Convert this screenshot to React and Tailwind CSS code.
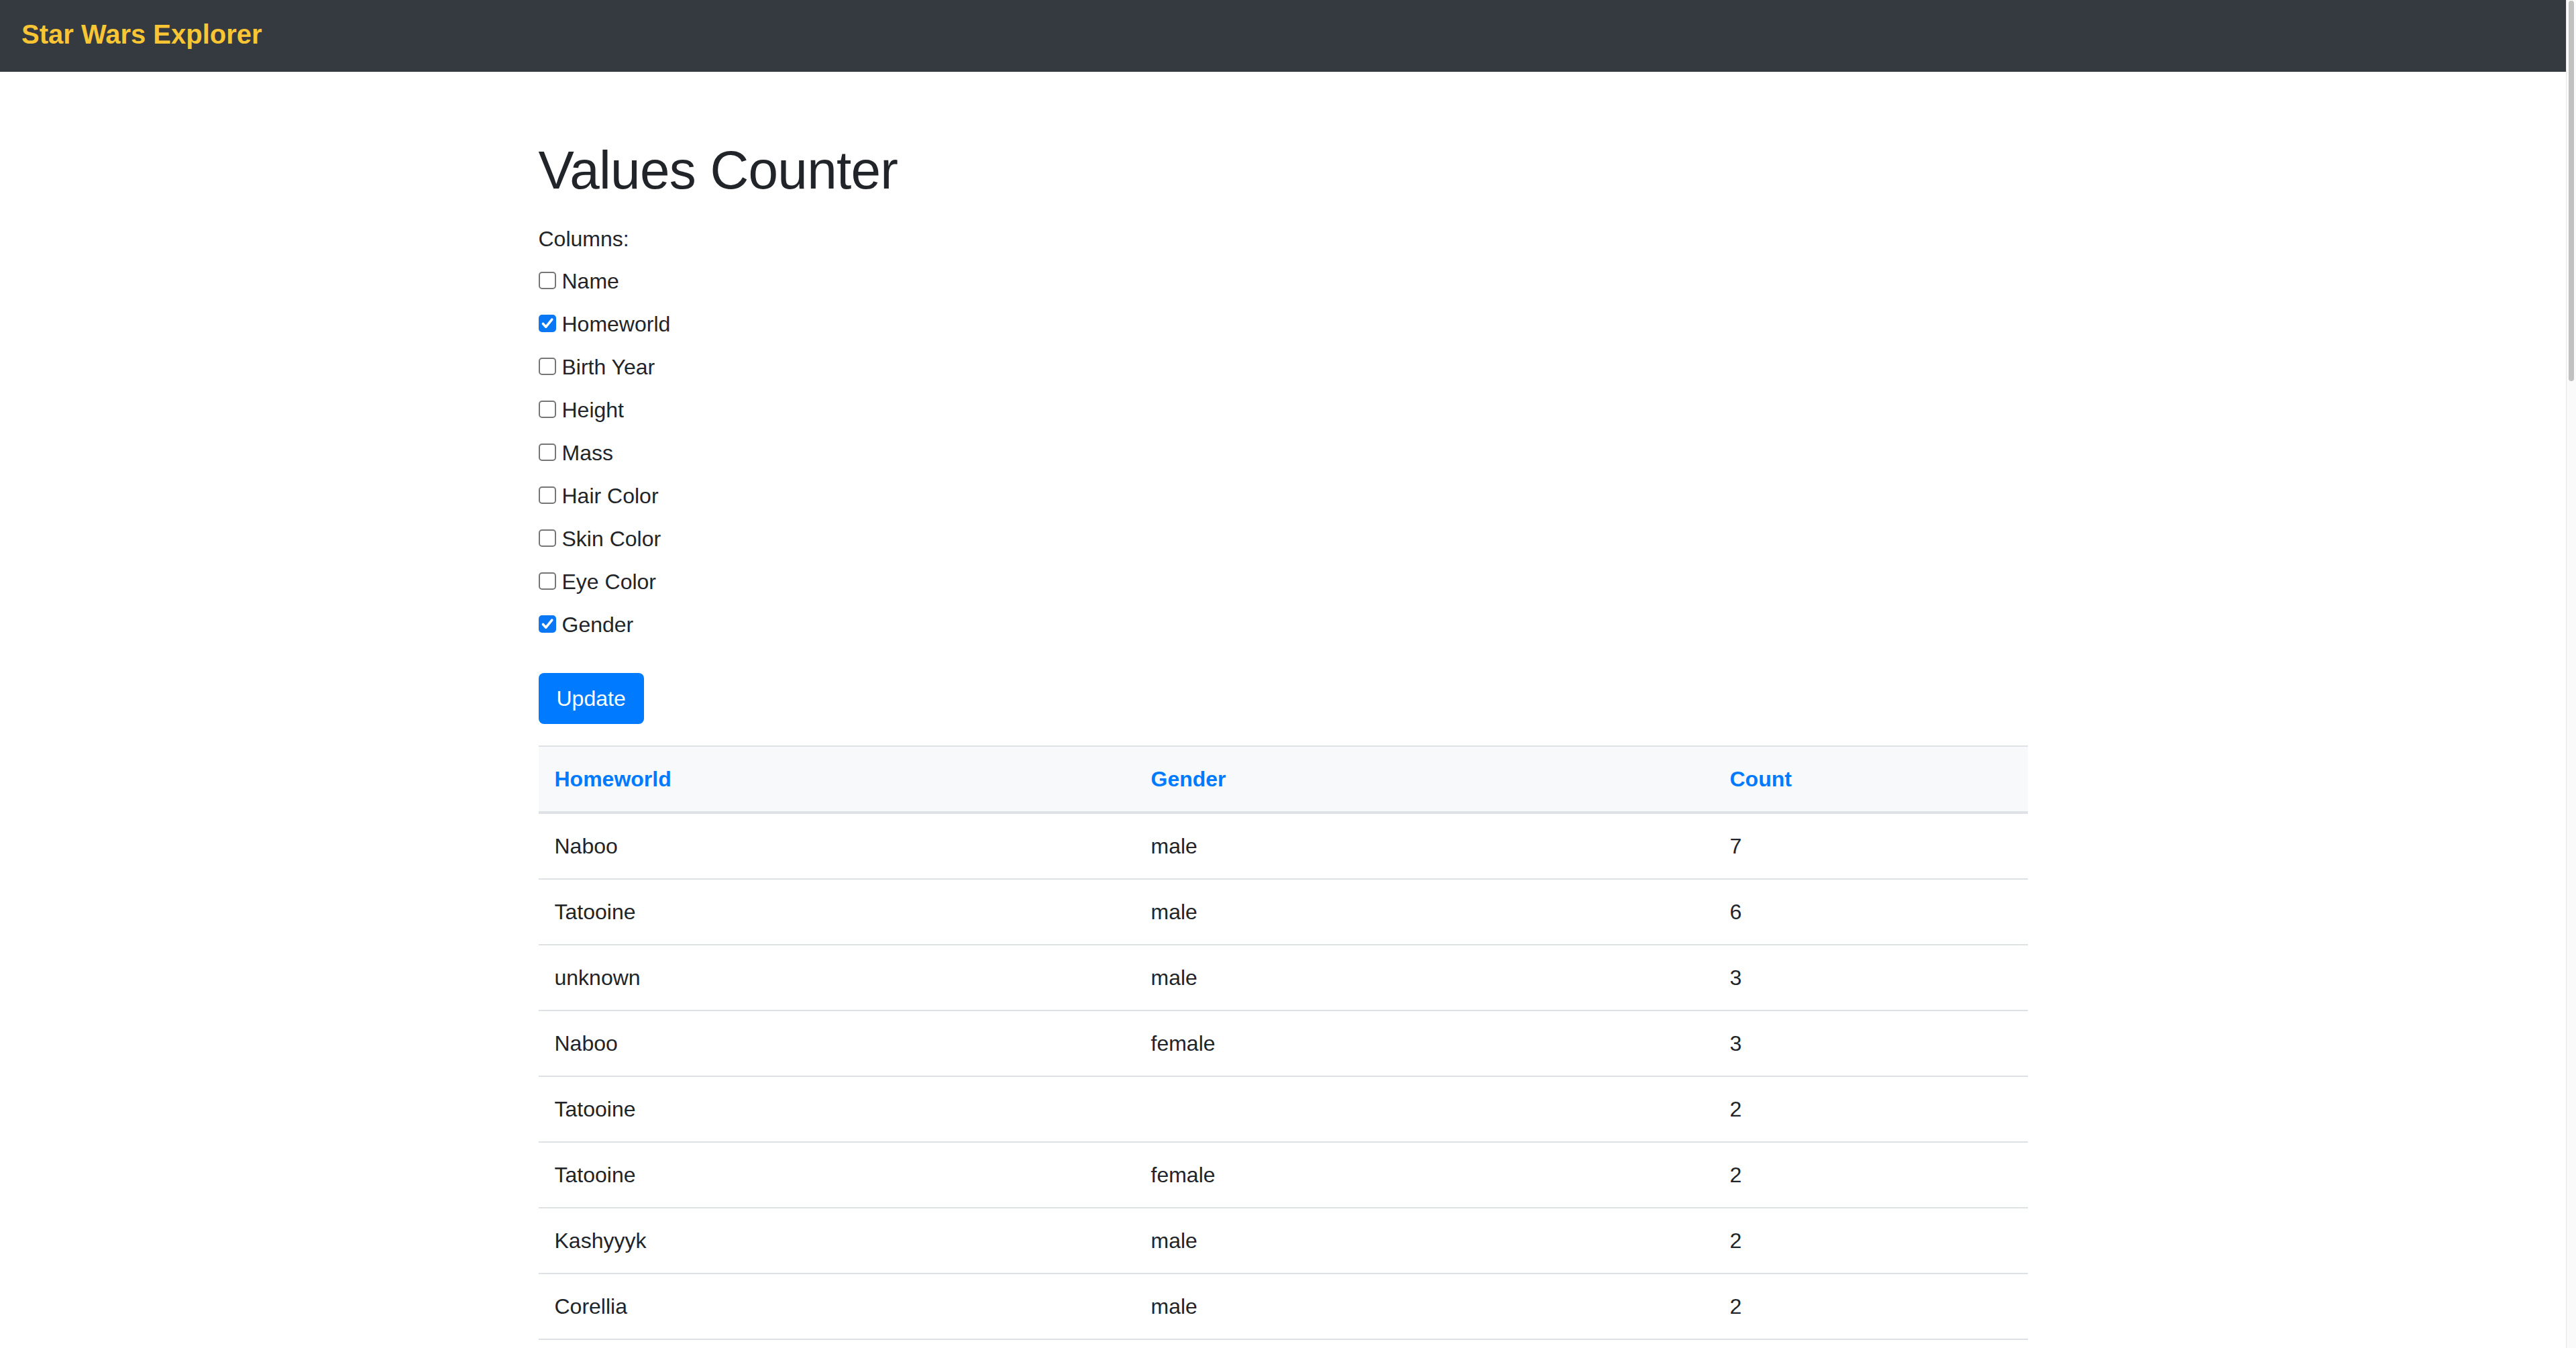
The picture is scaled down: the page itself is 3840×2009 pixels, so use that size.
import React from "react";

const columns = [
  { label: "Name", checked: false },
  { label: "Homeworld", checked: true },
  { label: "Birth Year", checked: false },
  { label: "Height", checked: false },
  { label: "Mass", checked: false },
  { label: "Hair Color", checked: false },
  { label: "Skin Color", checked: false },
  { label: "Eye Color", checked: false },
  { label: "Gender", checked: true },
];

const rows = [
  ["Naboo", "male", "7"],
  ["Tatooine", "male", "6"],
  ["unknown", "male", "3"],
  ["Naboo", "female", "3"],
  ["Tatooine", "", "2"],
  ["Tatooine", "female", "2"],
  ["Kashyyyk", "male", "2"],
  ["Corellia", "male", "2"],
];

function Box({ checked }) {
  if (checked) {
    return (
      <span className="flex h-[26px] w-[26px] shrink-0 items-center justify-center rounded-[5px] bg-[#0a77f5]">
        <svg width="26" height="26" viewBox="0 0 26 26">
          <path
            d="M6.5 13.5 L10.8 18.2 L19.8 7.2"
            fill="none"
            stroke="#ffffff"
            strokeWidth="3.6"
            strokeLinecap="round"
            strokeLinejoin="round"
          />
        </svg>
      </span>
    );
  }
  return (
    <span className="block h-[26px] w-[26px] shrink-0 rounded-[5px] border-2 border-[#767676] bg-white" />
  );
}

export default function App() {
  return (
    <div className="flex h-[2009px] w-[3840px] overflow-hidden bg-white font-['Liberation_Sans',Arial,sans-serif] text-[#212529]">
      <div className="flex min-w-0 flex-1 flex-col">
        <nav className="h-[107px] shrink-0 bg-[#343a40] pl-[32px] pt-[21px]">
          <span className="text-[40px] font-bold leading-[60px] text-[#f9c535]">
            Star Wars Explorer
          </span>
        </nav>
        <main className="mx-auto w-[2220px]">
          <h1 className="mt-[99px] text-[80px] font-medium leading-[96px] tracking-[-0.7px]">
            Values Counter
          </h1>
          <div className="mt-[30px] text-[32px] leading-[48px]">Columns:</div>
          <div className="mt-[15px] flex flex-col gap-[16px]">
            {columns.map((c) => (
              <label
                key={c.label}
                className="flex h-[48px] items-center text-[32px] leading-[48px]"
              >
                <span className="mb-[3px] mr-[9px]">
                  <Box checked={c.checked} />
                </span>
                <span>{c.label}</span>
              </label>
            ))}
          </div>
          <button className="mt-[48px] h-[76px] rounded-[8px] bg-[#007bff] px-[27px] text-[32px] leading-[48px] text-white">
            Update
          </button>
          <div className="mt-[32px] text-[32px] leading-[48px]">
            <div className="flex h-[102px] items-center border-t-2 border-b-4 border-[#dee2e6] bg-[#f8f9fa] font-bold text-[#007bff]">
              <div className="w-[889px] px-[24px]">Homeworld</div>
              <div className="w-[863px] px-[24px]">Gender</div>
              <div className="flex-1 px-[24px]">Count</div>
            </div>
            {rows.map((r, i) => (
              <div
                key={i}
                className="flex h-[98px] items-center border-b-2 border-[#dee2e6]"
              >
                <div className="w-[889px] px-[24px]">{r[0]}</div>
                <div className="w-[863px] px-[24px]">{r[1]}</div>
                <div className="flex-1 px-[24px]">{r[2]}</div>
              </div>
            ))}
          </div>
        </main>
      </div>
      <div className="w-[15px] shrink-0 border-l border-[#e6e6e6] bg-[#fafafa]">
        <div className="ml-[3px] mt-[1px] h-[567px] w-[8px] rounded-full bg-[#c1c1c1]" />
      </div>
    </div>
  );
}
